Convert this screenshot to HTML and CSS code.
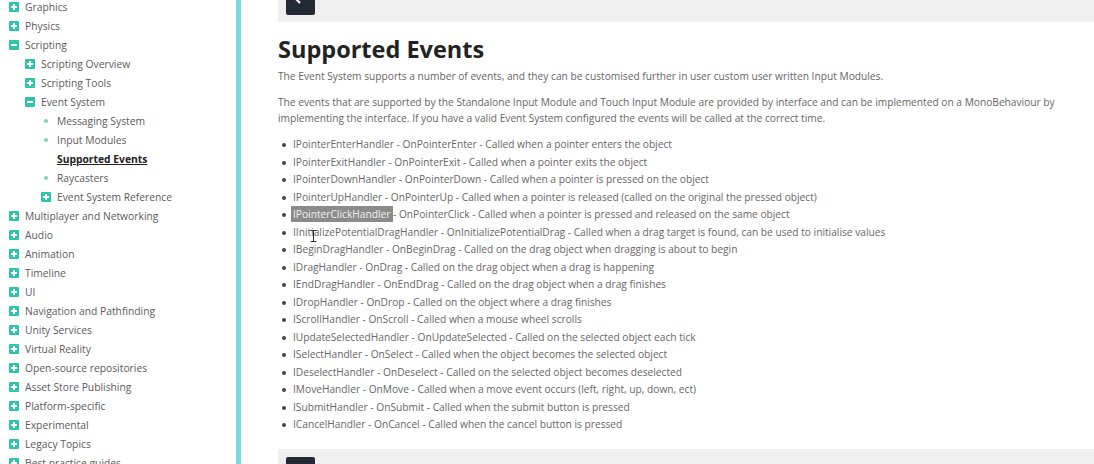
FILE: index.html
```html
<!DOCTYPE html>
<html lang="en">
<head>
<meta charset="utf-8">
<title>Supported Events</title>
<link rel="stylesheet" href="styles.css">
</head>
<body>
<div class="page">
  <nav class="sidebar">
    <ul class="toc">
      <li class="row lv1"><span class="mk plus"></span><span>Graphics</span></li>
      <li class="row lv1"><span class="mk plus"></span><span>Physics</span></li>
      <li class="row lv1"><span class="mk minus"></span><span>Scripting</span></li>
      <li class="row lv2"><span class="mk plus"></span><span>Scripting Overview</span></li>
      <li class="row lv2"><span class="mk plus"></span><span>Scripting Tools</span></li>
      <li class="row lv2"><span class="mk minus"></span><span>Event System</span></li>
      <li class="row lv3"><span class="mk dot"></span><span>Messaging System</span></li>
      <li class="row lv3"><span class="mk dot"></span><span>Input Modules</span></li>
      <li class="row lv3 current"><span class="mk"></span><span>Supported Events</span></li>
      <li class="row lv3"><span class="mk dot"></span><span>Raycasters</span></li>
      <li class="row lv3"><span class="mk plus"></span><span>Event System Reference</span></li>
      <li class="row lv1"><span class="mk plus"></span><span>Multiplayer and Networking</span></li>
      <li class="row lv1"><span class="mk plus"></span><span>Audio</span></li>
      <li class="row lv1"><span class="mk plus"></span><span>Animation</span></li>
      <li class="row lv1"><span class="mk plus"></span><span>Timeline</span></li>
      <li class="row lv1"><span class="mk plus"></span><span>UI</span></li>
      <li class="row lv1"><span class="mk plus"></span><span>Navigation and Pathfinding</span></li>
      <li class="row lv1"><span class="mk plus"></span><span>Unity Services</span></li>
      <li class="row lv1"><span class="mk plus"></span><span>Virtual Reality</span></li>
      <li class="row lv1"><span class="mk plus"></span><span>Open-source repositories</span></li>
      <li class="row lv1"><span class="mk plus"></span><span>Asset Store Publishing</span></li>
      <li class="row lv1"><span class="mk plus"></span><span>Platform-specific</span></li>
      <li class="row lv1"><span class="mk plus"></span><span>Experimental</span></li>
      <li class="row lv1"><span class="mk plus"></span><span>Legacy Topics</span></li>
      <li class="row lv1"><span class="mk plus"></span><span>Best practice guides</span></li>
    </ul>
  </nav>
  <main class="content">
    <div class="navbar">
      <button class="nav-btn" aria-label="Previous">
        <svg width="14" height="10" viewBox="0 0 14 10"><path d="M13 5H2M6 1L2 5l4 4" fill="none" stroke="#fff" stroke-width="2.2"/></svg>
      </button>
    </div>
    <h1 class="title">Supported Events</h1>
    <p class="para p1">The Event System supports a number of events, and they can be customised further in user custom user written Input Modules.</p>
    <p class="para p2">The events that are supported by the Standalone Input Module and Touch Input Module are provided by interface and can be implemented on a MonoBehaviour by implementing the interface. If you have a valid Event System configured the events will be called at the correct time.</p>
    <ul class="events">
      <li>IPointerEnterHandler - OnPointerEnter - Called when a pointer enters the object</li>
      <li>IPointerExitHandler - OnPointerExit - Called when a pointer exits the object</li>
      <li>IPointerDownHandler - OnPointerDown - Called when a pointer is pressed on the object</li>
      <li>IPointerUpHandler - OnPointerUp - Called when a pointer is released (called on the original the pressed object)</li>
      <li><span class="sel">IPointerClickHandler </span>- OnPointerClick - Called when a pointer is pressed and released on the same object</li>
      <li>IInitializePotentialDragHandler - OnInitializePotentialDrag - Called when a drag target is found, can be used to initialise values<svg class="ibeam" width="7" height="12" viewBox="0 0 7 12"><path d="M0.5 0.5h6M0.5 11.5h6M3.5 0.5v11" fill="none" stroke="#333" stroke-width="1"/></svg></li>
      <li>IBeginDragHandler - OnBeginDrag - Called on the drag object when dragging is about to begin</li>
      <li>IDragHandler - OnDrag - Called on the drag object when a drag is happening</li>
      <li>IEndDragHandler - OnEndDrag - Called on the drag object when a drag finishes</li>
      <li>IDropHandler - OnDrop - Called on the object where a drag finishes</li>
      <li>IScrollHandler - OnScroll - Called when a mouse wheel scrolls</li>
      <li>IUpdateSelectedHandler - OnUpdateSelected - Called on the selected object each tick</li>
      <li>ISelectHandler - OnSelect - Called when the object becomes the selected object</li>
      <li>IDeselectHandler - OnDeselect - Called on the selected object becomes deselected</li>
      <li>IMoveHandler - OnMove - Called when a move event occurs (left, right, up, down, ect)</li>
      <li>ISubmitHandler - OnSubmit - Called when the submit button is pressed</li>
      <li>ICancelHandler - OnCancel - Called when the cancel button is pressed</li>
    </ul>
    <div class="navbar bottom">
      <button class="nav-btn low" aria-label="Next"></button>
    </div>
  </main>
</div>
</body>
</html>
```
FILE: styles.css
```css
html, body {
  margin: 0;
  padding: 0;
  background: #ffffff;
  height: 464px;
  overflow: hidden;
}

.page {
  display: flex;
  height: 464px;
  font-family: "Open Sans", "Liberation Sans", sans-serif;
}

.sidebar {
  width: 236px;
  flex: none;
  border-right: 5px solid #7dd8e3;
  overflow: hidden;
}

.toc {
  list-style: none;
  margin: -3px 0 0 0;
  padding: 0;
}

.row {
  display: flex;
  align-items: center;
  gap: 6px;
  height: 19px;
  font-size: 10.3px;
  color: #5a5a5a;
  white-space: nowrap;
}

.lv1 { padding-left: 9px; }
.lv2 { padding-left: 25px; }
.lv3 { padding-left: 41px; }

.mk {
  width: 10px;
  height: 10px;
  flex: none;
  position: relative;
  border-radius: 1px;
}

.plus, .minus {
  background: #2dc4ab;
}

.plus::before, .minus::before {
  content: "";
  position: absolute;
  left: 2px;
  top: 4px;
  width: 6px;
  height: 2px;
  background: #ffffff;
}

.plus::after {
  content: "";
  position: absolute;
  left: 4px;
  top: 2px;
  width: 2px;
  height: 6px;
  background: #ffffff;
}

.dot::before {
  content: "";
  position: absolute;
  left: 3px;
  top: 3px;
  width: 4px;
  height: 4px;
  border-radius: 50%;
  background: #7fd3c3;
}

.current {
  color: #222222;
  font-weight: 700;
  text-decoration: underline;
}

.content {
  flex: 1;
  padding-left: 37px;
  overflow: hidden;
}

.navbar {
  height: 22px;
  background: #efefef;
  padding-left: 8px;
  overflow: hidden;
}

.nav-btn {
  display: flex;
  align-items: flex-end;
  justify-content: center;
  width: 29px;
  height: 30px;
  margin-top: -15px;
  padding: 0 0 11px 0;
  border: none;
  border-radius: 2px;
  background: #222a36;
}

.bottom {
  margin-top: 15px;
  height: 30px;
}

.nav-btn.low {
  margin-top: 8px;
}

.title {
  margin: 12px 0 0 0;
  font-size: 23.5px;
  line-height: 30px;
  font-weight: 700;
  color: #222222;
}

.para {
  margin: 0;
  font-size: 10.2px;
  line-height: 16px;
  color: #666666;
}

.p1 { margin-top: 4px; }
.p2 { margin-top: 10px; }

.events {
  list-style: none;
  margin: 10px 0 0 0;
  padding: 0;
}

.events li {
  position: relative;
  padding-left: 15px;
  font-size: 10.2px;
  line-height: 17.5px;
  color: #666666;
  white-space: nowrap;
}

.events li::before {
  content: "";
  position: absolute;
  left: 4px;
  top: 7px;
  width: 4px;
  height: 4px;
  border-radius: 50%;
  background: #444444;
}

.sel {
  background: #8b8b8b;
  color: #f2f2f2;
  padding: 1px 0;
  margin-left: -2px;
  padding-left: 2px;
}

.ibeam {
  position: absolute;
  left: 32px;
  top: 6px;
}
```
